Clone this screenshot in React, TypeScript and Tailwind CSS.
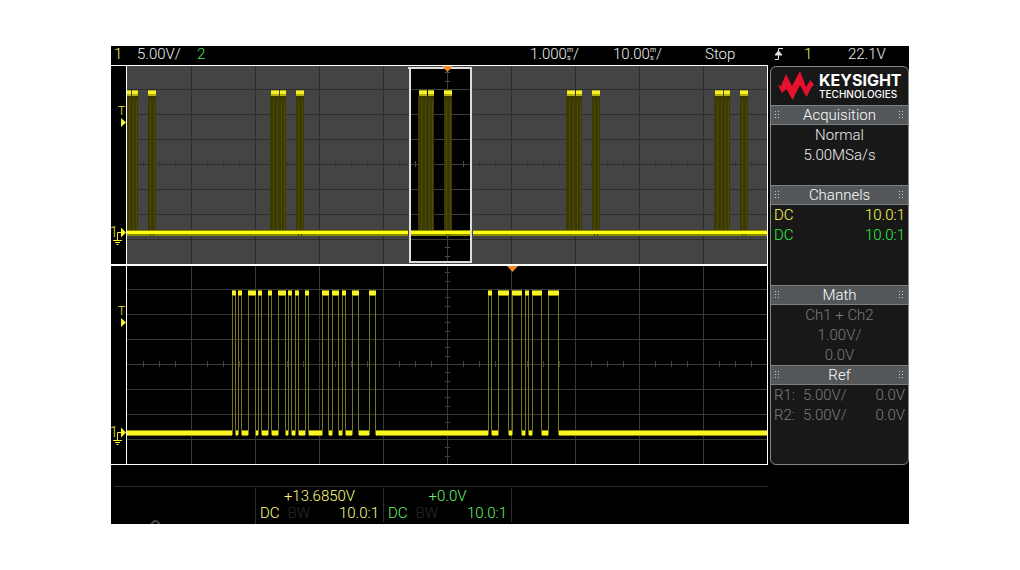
import type { ReactNode } from 'react';

const GRID_X = [64, 128, 192, 256, 320, 384, 448, 512, 576];
const GRID_Y = [23, 48, 73, 98, 123, 148, 173];
const TICKS_X = Array.from({ length: 39 }, (_, i) => (i + 1) * 16);
const TICKS_Y = [6, 15, 31, 40, 56, 65, 81, 90, 106, 115, 131, 140, 156, 165, 181, 190];

// Overview: every burst repeats the same three blocks
const BURSTS = [-4, 144, 292, 440, 588];
const BLOCKS = [
  { x: 0, w: 8 },
  { x: 9, w: 6 },
  { x: 25, w: 8 },
];

// Zoomed trace: start and end of every high level
const PULSES = [
  [105, 109], [111, 115], [121, 129], [131, 135], [141, 145], [151, 159], [161, 165],
  [168, 172], [178, 182], [195, 202], [205, 212], [215, 219], [225, 232], [242, 249],
  [361, 365], [371, 382], [385, 395], [398, 402], [405, 415], [421, 432],
];

function Grid({ line, tick }: { line: string; tick: string }) {
  return (
    <g shapeRendering="crispEdges">
      {TICKS_X.map((x) => <rect key={x} x={x} y={95} width={1} height={6} fill={tick} />)}
      {TICKS_Y.map((y) => <rect key={y} x={318} y={y} width={5} height={1} fill={tick} />)}
      {GRID_X.map((x) => <rect key={x} x={x} y={0} width={1} height={198} fill={line} />)}
      {GRID_Y.map((y) => <rect key={y} x={0} y={y} width={640} height={1} fill={line} />)}
    </g>
  );
}

function Plot({ label, children }: { label: string; children: ReactNode }) {
  return (
    <svg
      role="img"
      aria-label={label}
      viewBox="0 0 640 198"
      preserveAspectRatio="none"
      className="block h-[198px] w-full min-w-0 flex-1"
    >
      {children}
    </svg>
  );
}

function Overview() {
  return (
    <Plot label="Channel 1 overview">
      <rect width={640} height={198} fill="#444444" />
      <Grid line="#2e2e2e" tick="#373737" />
      <svg x={284} y={3} width={59} height={192} viewBox="284 3 59 192">
        <rect x={284} y={3} width={59} height={192} fill="#000000" />
        <Grid line="#3c3c3c" tick="#505050" />
      </svg>
      <g shapeRendering="crispEdges">
        {BURSTS.map((start) => (
          <g key={start}>
            <rect x={start - 1} y={30} width={16} height={138} fill="#3c3a02" />
            <rect x={start + 25} y={30} width={8} height={138} fill="#3c3a02" />
            {[2, 6, 10, 13, 27, 31].map((dx) => (
              <rect key={dx} x={start + dx} y={34} width={1} height={132} fill="#4c4a04" />
            ))}
            {BLOCKS.map((b) => (
              <g key={b.x}>
                <rect x={start + b.x} y={24} width={b.w} height={6} fill="#b4b010" />
                <rect x={start + b.x} y={25} width={b.w} height={3} fill="#f6f028" />
              </g>
            ))}
          </g>
        ))}
        <rect x={0} y={164} width={640} height={6} fill="#8c8a00" />
        <rect x={0} y={165} width={640} height={3} fill="#ffff10" />
        {BURSTS.map((start) => (
          <path key={start} d={`M${start + 27} 168v3M${start + 30} 168v3`} stroke="#4c4a04" />
        ))}
        <path d="M281.500 1V197M345.500 1V197" stroke="#444444" />
        <path d="M281 2H345M283 1V196M344 1V196M282 196H345" fill="none" stroke="#dcdcdc" strokeWidth={2} />
      </g>
      <path d="M315 0H326L320.500 6Z" fill="#f08c28" />
    </Plot>
  );
}

function Detail() {
  let low = 'M0 167';
  let high = '';
  let edges = '';
  for (const [from, to] of PULSES) {
    low += `H${from}M${to} 167`;
    high += `M${from} 27H${to}`;
    edges += `M${from}.5 25V169M${to - 1}.5 25V169`;
  }
  low += 'H640';

  return (
    <Plot label="Channel 1 zoomed">
      <rect width={640} height={198} fill="#000000" />
      <Grid line="#373a37" tick="#424242" />
      <g fill="none" shapeRendering="crispEdges">
        <path d={edges} stroke="#77751c" />
        <path d={high} stroke="#8e8c0c" strokeWidth={6} />
        <path d={high} stroke="#f8f428" strokeWidth={4} />
        <path d={low} stroke="#8e8c0c" strokeWidth={6} />
        <path d={low} stroke="#f8f61c" strokeWidth={4} />
      </g>
      <path d="M380 0H391L385.500 6Z" fill="#f08c28" />
    </Plot>
  );
}

// Trigger level and channel ground markers
function Gutter() {
  return (
    <svg viewBox="0 0 15 198" className="block h-[198px] w-[15px] shrink-0 font-light" fill="#f6f028">
      <text x={7} y={49} fontSize={12}>T</text>
      <path d="M10 52L15 56.500L10 61Z" />
      <text x={-1} y={171} fontSize={14}>1</text>
      <path d="M10 161.500L15 166.500L10 171.500Z" />
      <path d="M10 166.500H6.500V174M2 174.500H11M4 176.500H9M5.500 178.500H7.500" fill="none" stroke="#f6f028" />
    </svg>
  );
}

function Milli() {
  return (
    <span className="inline-flex flex-col text-[7px] leading-[8px] font-normal">
      <span>m</span>
      <span>s</span>
    </span>
  );
}

function Grip() {
  return (
    <svg viewBox="0 0 5 8" className="h-2 w-[5px]" fill="#c8c8c8" shapeRendering="crispEdges">
      {[0, 3, 6].map((y) => (
        <g key={y}>
          <rect x={0} y={y} width={1} height={1} />
          <rect x={3} y={y} width={1} height={1} />
        </g>
      ))}
    </svg>
  );
}

function Section({ title, className, children }: { title: string; className: string; children: ReactNode }) {
  return (
    <section className={className}>
      <h2 className="flex h-5 items-center justify-between border-y border-[#7b7f81] bg-[#53575a] px-1 text-white">
        <Grip />
        {title}
        <Grip />
      </h2>
      {children}
    </section>
  );
}

function Row({ left, right }: { left: ReactNode; right: string }) {
  return (
    <p className="flex justify-between px-[3px]">
      <span className="flex">{left}</span>
      <span>{right}</span>
    </p>
  );
}

function Logo() {
  return (
    <div className="flex h-[38px] items-center gap-[5px] pl-[7px] text-white">
      <svg viewBox="0 0 36 30" className="h-[30px] w-9 shrink-0" fill="#e8102c">
        <path d="M0 14L3 15L8 3L14 15L22 0L28 16L32.500 9L36 14L33.500 16L28.500 26L22 14L14.500 29L8.500 18L4 22Z" />
      </svg>
      <div className="font-[Inter]">
        <p className="text-[16px] leading-4 font-bold">KEYSIGHT</p>
        <p className="text-[10px] leading-3 font-medium">TECHNOLOGIES</p>
      </div>
    </div>
  );
}

function ChannelBox({ offset, className }: { offset: string; className: string }) {
  return (
    <div className={`h-[34px] w-32 border-r border-[#2c2c2c] px-1 leading-[17px] ${className}`}>
      <p className="text-center">{offset}</p>
      <p className="flex gap-2">
        <span>DC</span>
        <span className="text-[#2a2a2a]">BW</span>
        <span className="ml-auto">10.0:1</span>
      </p>
    </div>
  );
}

export default function App() {
  return (
    <main className="min-h-screen bg-white pt-[46px] font-[Roboto,sans-serif] text-[15px] font-light">
      <div className="mx-auto max-w-[798px] overflow-hidden bg-black">
        <header className="flex h-[19px] items-center pb-[3px] leading-4 text-[#f0f0f0]">
          <span className="w-[26px] pl-[3px] text-[#f4f468]">1</span>
          <span className="w-[60px]">5.00V/</span>
          <span className="text-[#50e050]">2</span>
          <span className="ml-auto flex w-[83px] items-center">1.000<Milli />/</span>
          <span className="flex w-[92px] items-center">10.00<Milli />/</span>
          <span className="w-[69px]">Stop</span>
          <svg viewBox="0 0 10 12" className="h-3 w-[10px]" fill="none" stroke="#e6e6e6">
            <path d="M1 11.500H4.500V0.500H9" />
            <path d="M1 7L4.500 3L8 7Z" fill="#e6e6e6" />
          </svg>
          <span className="w-[64px] pl-5 text-[#f4f468]">1</span>
          <span className="w-[61px]">22.1V</span>
        </header>

        <div className="flex">
          <div className="min-w-0 flex-1 border-y border-white">
            <div className="flex border-b-2 border-white">
              <Gutter />
              <div className="flex min-w-0 flex-1 border-x border-white"><Overview /></div>
            </div>
            <div className="flex">
              <Gutter />
              <div className="flex min-w-0 flex-1 border-x border-white"><Detail /></div>
            </div>
          </div>

          <aside className="mt-px ml-[2px] w-[139px] shrink-0 rounded-md border border-[#858585] bg-[#181818] leading-5 text-[#f0f0f0]">
            <Logo />
            <Section title="Acquisition" className="h-20 text-center">
              <p>Normal</p>
              <p>5.00MSa/s</p>
            </Section>
            <Section title="Channels" className="h-[100px]">
              <div className="text-[#ffff50]"><Row left="DC" right="10.0:1" /></div>
              <div className="text-[#30f040]"><Row left="DC" right="10.0:1" /></div>
            </Section>
            <Section title="Math" className="h-20 text-center">
              <div className="text-[#7c7c7c]">
                <p>Ch1 + Ch2</p>
                <p>1.00V/</p>
                <p>0.0V</p>
              </div>
            </Section>
            <Section title="Ref" className="text-[#7c7c7c]">
              <Row left={<><span className="w-[29px]">R1:</span>5.00V/</>} right="0.0V" />
              <Row left={<><span className="w-[29px]">R2:</span>5.00V/</>} right="0.0V" />
            </Section>
          </aside>
        </div>

        <footer className="mt-[21px] h-[38px]">
          <div className="mr-[141px] ml-[3px] border-t border-[#2c2c2c]" />
          <div className="flex pt-px">
            <div className="flex h-[36px] w-[145px] items-end border-r border-[#2c2c2c] pl-[39px]">
              <svg viewBox="0 0 11 4" className="h-1 w-[11px]" fill="none" stroke="#484848" strokeWidth={2}>
                <path d="M1 5Q5.500 -3 10 5" />
              </svg>
            </div>
            <ChannelBox offset="+13.6850V" className="text-[#ffff80]" />
            <ChannelBox offset="+0.0V" className="text-[#68f068]" />
          </div>
        </footer>
      </div>
    </main>
  );
}
